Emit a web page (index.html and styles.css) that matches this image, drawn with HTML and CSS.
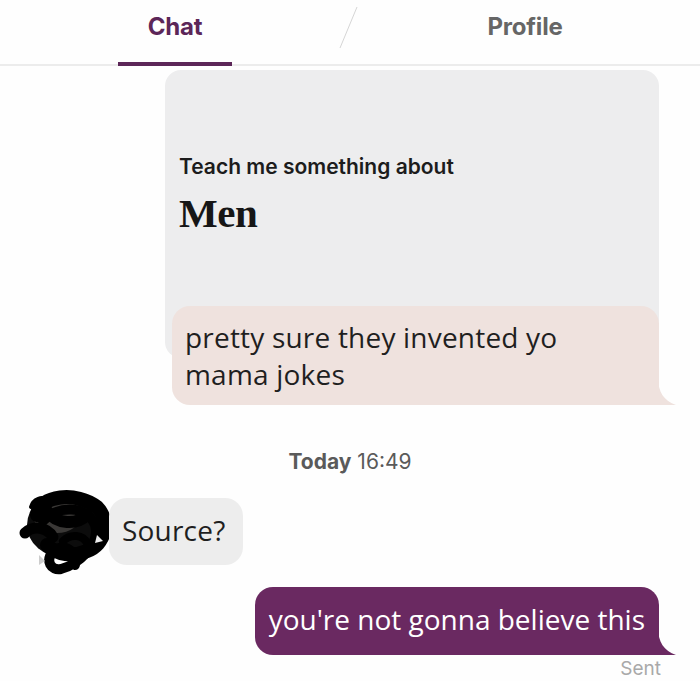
FILE: index.html
```html
<!DOCTYPE html>
<html lang="en">
<head>
    <meta charset="UTF-8">
    <meta name="viewport" content="width=device-width, initial-scale=1.0">
    <link rel="stylesheet" href="styles.css">
    <title>Chat</title>
</head>
<body>
    <div class="tabs">
        <div class="tab active"><span>Chat</span></div>
        <svg class="tab-divider" width="20" height="44" viewBox="0 0 20 44">
            <line x1="18" y1="1" x2="1" y2="42" stroke="#d6d6d6" stroke-width="1"/>
        </svg>
        <div class="tab"><span>Profile</span></div>
    </div>

    <div class="chat">
        <!-- prompt card with reply on top of it -->
        <div class="prompt-card">
            <div class="prompt-label">Teach me something about</div>
            <div class="prompt-answer">Men</div>
        </div>
        <div class="bubble reply">
            pretty sure they invented yo<br>mama jokes
            <svg class="tail" width="18" height="28" viewBox="0 0 18 28">
                <path d="M0 0 C0 15 6 24 18 28 L0 28 Z" fill="#efe2de"/>
            </svg>
        </div>

        <div class="timestamp"><b>Today</b> 16:49</div>

        <div class="row-in">
            <svg class="avatar" width="94" height="92" viewBox="0 0 94 92">
                <ellipse cx="48" cy="40" rx="38" ry="33" fill="#0c0c0c"/>
                <ellipse cx="40" cy="30" rx="24" ry="18" fill="#3a3836"/>
                <path d="M20 30 C22 10 60 6 80 22 C94 36 88 60 70 66 C56 72 40 70 30 60" fill="none" stroke="#000" stroke-width="14" stroke-linecap="round"/>
                <path d="M14 22 C16 14 26 10 30 16" fill="none" stroke="#000" stroke-width="4" stroke-linecap="round"/>
                <path d="M8 48 C16 40 30 42 36 52" fill="none" stroke="#000" stroke-width="11" stroke-linecap="round"/>
                <path d="M26 36 C40 20 70 20 78 40 C84 60 60 80 44 84 C34 86 28 76 36 66 C46 58 60 64 58 80" fill="none" stroke="#000" stroke-width="10" stroke-linecap="round"/>
                <path d="M30 26 C40 40 60 40 70 30" fill="none" stroke="#000" stroke-width="12" stroke-linecap="round"/>
                <path d="M46 56 C54 48 66 50 70 58" fill="none" stroke="#000" stroke-width="8" stroke-linecap="round"/>
                <path d="M80 50 L86 56 L78 58 Z" fill="#eee"/>
                <path d="M22 70 L28 76 L22 80 Z" fill="#ccc"/>
            </svg>
            <div class="bubble incoming">Source?</div>
        </div>

        <div class="row-out">
            <div class="bubble outgoing">
                you're not gonna believe this
                <svg class="tail" width="18" height="28" viewBox="0 0 18 28">
                    <path d="M0 0 C0 15 6 24 18 28 L0 28 Z" fill="#6a2961"/>
                </svg>
            </div>
            <div class="status">Sent</div>
        </div>
    </div>
</body>
</html>
```

FILE: styles.css
```css
* {
    margin: 0;
    padding: 0;
    box-sizing: border-box;
}

body {
    background-color: #fefefe;
    font-family: "Open Sans", Inter, sans-serif;
    color: #1d1d1d;
    width: 700px;
    height: 681px;
    overflow: hidden;
}

/* Tabs */
.tabs {
    position: relative;
    display: flex;
    height: 66px;
    border-bottom: 2px solid #ececec;
}

.tab {
    flex: 1;
    display: flex;
    justify-content: center;
}

.tab span {
    display: block;
    width: 114px;
    text-align: center;
    padding-top: 12px;
    font-family: Inter, sans-serif;
    font-size: 24px;
    font-weight: 700;
    color: #666;
    letter-spacing: -0.2px;
}

.tab.active span {
    color: #5c2658;
    border-bottom: 4px solid #5c2658;
    height: 66px;
}

.tab-divider {
    position: absolute;
    left: 339px;
    top: 6px;
}

/* Chat area */
.chat {
    display: flex;
    flex-direction: column;
}

.prompt-card {
    margin: 4px 0 0 165px;
    width: 494px;
    height: 288px;
    background-color: #ededee;
    border-radius: 16px;
    padding: 84px 14px 0 14px;
}

.prompt-label {
    font-family: Inter, sans-serif;
    font-size: 21px;
    font-weight: 600;
    color: #1c1c1c;
}

.prompt-answer {
    margin-top: 10px;
    font-family: "Liberation Serif", serif;
    font-size: 41px;
    font-weight: 700;
    color: #161616;
    letter-spacing: -0.5px;
}

.bubble {
    position: relative;
    font-size: 28px;
    line-height: 37px;
    letter-spacing: 0.2px;
    border-radius: 18px;
    white-space: nowrap;
}

.bubble .tail {
    position: absolute;
    right: -17px;
    bottom: 0;
}

.reply {
    margin: -52px 0 0 172px;
    width: 487px;
    padding: 13px 13px 12px;
    background-color: #efe2de;
    color: #1f1f1f;
    border-bottom-right-radius: 0;
}

.timestamp {
    margin-top: 44px;
    text-align: center;
    font-family: Inter, sans-serif;
    font-size: 21px;
    color: #5a5a5a;
}

.timestamp b {
    font-weight: 700;
}

.row-in {
    display: flex;
    align-items: center;
    margin-top: 11px;
    padding-left: 17px;
}

.avatar {
    margin-right: -2px;
}

.incoming {
    width: 134px;
    height: 67px;
    padding: 14px 13px;
    background-color: #ededed;
    color: #1f1f1f;
}

.row-out {
    display: flex;
    flex-direction: column;
    align-items: flex-end;
    padding-right: 41px;
    margin-top: 10px;
}

.outgoing {
    height: 68px;
    padding: 14px 14px;
    letter-spacing: 0;
    background-color: #6a2961;
    color: #fff;
    border-bottom-right-radius: 0;
}

.status {
    margin-top: 2px;
    margin-right: -2px;
    font-family: Inter, sans-serif;
    font-size: 19px;
    color: #a9a9a9;
}
```
